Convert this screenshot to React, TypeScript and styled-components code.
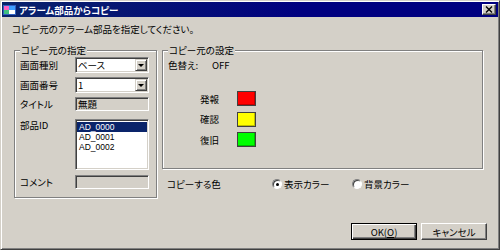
import React from 'react';
import styled, { createGlobalStyle } from 'styled-components';

const GlobalStyle = createGlobalStyle`
  html, body {
    margin: 0;
    padding: 0;
    background: #d4d0c8;
  }
  body {
    font-family: "Noto Sans CJK JP", "Liberation Sans", sans-serif;
    font-size: 9.5px;
    font-feature-settings: "palt";
    color: #000;
  }
  * {
    box-sizing: border-box;
  }
`;

const Window = styled.div`
  width: 500px;
  height: 250px;
  background: #d4d0c8;
  border: 1px solid;
  border-color: #d4d0c8 #404040 #404040 #d4d0c8;
  box-shadow: inset 1px 1px 0 #fff, inset -1px -1px 0 #808080;
  padding: 1px;
  display: flex;
  flex-direction: column;
`;

const TitleBar = styled.div`
  height: 15px;
  display: flex;
  align-items: center;
  padding: 0 2px 0 1px;
  background: linear-gradient(to right, #0a246a, #000080 60%);
  color: #fff;
`;

const TitleText = styled.span`
  margin-left: 3px;
  font-weight: bold;
  line-height: 12px;
`;

const CloseButton = styled.div`
  margin-left: auto;
  width: 14px;
  height: 11px;
  display: flex;
  align-items: center;
  justify-content: center;
  background: #d4d0c8;
  border: 1px solid;
  border-color: #fff #404040 #404040 #fff;
  box-shadow: inset -1px -1px 0 #808080;
`;

const Instruction = styled.div`
  margin: 6px 0 0 10px;
  line-height: 12px;
`;

const Main = styled.div`
  display: flex;
  gap: 5px;
  margin: 9px 0 0 12px;
`;

const Group = styled.fieldset<{ $w: number; $h: number }>`
  margin: 0;
  width: ${(p) => p.$w}px;
  height: ${(p) => p.$h}px;
  border: 1px solid #808080;
  box-shadow: inset 1px 1px 0 #fff, 1px 1px 0 #fff;
  padding: 1px 6px 6px 5px;
`;

const Legend = styled.legend`
  padding: 0 1px;
  line-height: 12px;
  background: #d4d0c8;
`;

const FormRow = styled.div<{ $mt: number; $top?: boolean }>`
  display: flex;
  align-items: ${(p) => (p.$top ? 'flex-start' : 'center')};
  margin-top: ${(p) => p.$mt}px;
`;

const Label = styled.div<{ $w?: number }>`
  width: ${(p) => p.$w ?? 55}px;
  line-height: 12px;
  flex-shrink: 0;
`;

const Sunken = styled.div`
  width: 74px;
  border: 1px solid;
  border-color: #808080 #fff #fff #808080;
  box-shadow: inset 1px 1px 0 #404040, inset -1px -1px 0 #d4d0c8;
  padding: 1px;
`;

const Combo = styled(Sunken)`
  height: 16px;
  background: #fff;
  display: flex;
  align-items: center;
`;

const ComboText = styled.span`
  flex: 1;
  padding-left: 1px;
  line-height: 12px;
`;

const DropButton = styled.div`
  width: 12px;
  height: 12px;
  background: #d4d0c8;
  border: 1px solid;
  border-color: #d4d0c8 #404040 #404040 #d4d0c8;
  box-shadow: inset 1px 1px 0 #fff, inset -1px -1px 0 #808080;
  display: flex;
  align-items: center;
  justify-content: center;

  &::after {
    content: '';
    border-left: 3px solid transparent;
    border-right: 3px solid transparent;
    border-top: 3px solid #000;
    margin-top: 1px;
  }
`;

const ReadOnlyField = styled(Sunken)`
  height: 14px;
  background: #d4d0c8;
  padding-left: 2px;
  line-height: 10px;
`;

const ListBox = styled(Sunken)`
  height: 51px;
  background: #fff;
  padding: 2px 1px 1px 1px;
`;

const ListItem = styled.div<{ $selected?: boolean }>`
  height: 10px;
  line-height: 10px;
  padding-left: 2px;
  font-family: "Liberation Sans", sans-serif;
  font-size: 8.5px;
  background: ${(p) => (p.$selected ? '#0a246a' : 'transparent')};
  color: ${(p) => (p.$selected ? '#fff' : '#000')};
`;

const RightColumn = styled.div`
  display: flex;
  flex-direction: column;
`;

const SwitchRow = styled.div`
  display: flex;
  margin-top: 2px;
  line-height: 12px;
`;

const ColorTable = styled.div`
  display: grid;
  grid-template-columns: 37px 19px;
  grid-auto-rows: 15px;
  row-gap: 5.5px;
  align-items: center;
  margin: 20px 0 0 32px;
`;

const Swatch = styled.div<{ $color: string }>`
  width: 19px;
  height: 15px;
  background: ${(p) => p.$color};
  border: 1px solid #404040;
  box-shadow: inset -1px -1px 0 rgba(0, 0, 0, 0.25);
`;

const CopyRow = styled.div`
  display: flex;
  align-items: center;
  margin: 9px 0 0 5px;
  line-height: 12px;
`;

const RadioOption = styled.label<{ $w: number }>`
  display: flex;
  align-items: center;
  gap: 2px;
  width: ${(p) => p.$w}px;
`;

const Radio = styled.span<{ $checked?: boolean }>`
  width: 10px;
  height: 10px;
  border-radius: 50%;
  background: #fff;
  border: 1px solid;
  border-color: #808080 #fff #fff #808080;
  box-shadow: inset 1px 1px 0 #404040;
  display: flex;
  align-items: center;
  justify-content: center;

  &::after {
    content: '';
    width: 3px;
    height: 3px;
    border-radius: 50%;
    background: ${(p) => (p.$checked ? '#000' : 'transparent')};
  }
`;

const ButtonRow = styled.div`
  display: flex;
  justify-content: flex-end;
  gap: 4px;
  margin: 25px 11px 0 0;
`;

const Button = styled.button<{ $default?: boolean }>`
  width: 66px;
  height: 17px;
  padding: 0;
  font: inherit;
  font-feature-settings: "palt";
  color: #000;
  background: #d4d0c8;
  border: 1px solid;
  border-color: ${(p) => (p.$default ? '#000' : '#fff #404040 #404040 #fff')};
  box-shadow: ${(p) =>
    p.$default
      ? 'inset 1px 1px 0 #fff, inset -1px -1px 0 #404040, inset -2px -2px 0 #808080'
      : 'inset -1px -1px 0 #808080'};
  line-height: 12px;
`;

const TitleIcon = () => (
  <svg width="13" height="12" viewBox="0 0 13 12">
    <rect x="0.5" y="1.5" width="12" height="9" fill="#e8f0ff" stroke="#3060c0" />
    <rect x="1" y="2" width="5" height="4" fill="#ff60c0" />
    <rect x="6" y="2" width="6" height="4" fill="#40a0ff" />
    <rect x="1" y="6" width="5" height="4" fill="#40c080" />
    <rect x="6" y="6" width="6" height="4" fill="#ffffff" />
  </svg>
);

const CloseIcon = () => (
  <svg width="8" height="7" viewBox="0 0 8 7">
    <path d="M1 0.5 L7 6.5 M7 0.5 L1 6.5" stroke="#000" strokeWidth="1.4" />
  </svg>
);

const App: React.FC = () => {
  return (
    <Window>
      <GlobalStyle />
      <TitleBar>
        <TitleIcon />
        <TitleText>アラーム部品からコピー</TitleText>
        <CloseButton>
          <CloseIcon />
        </CloseButton>
      </TitleBar>

      <Instruction>コピー元のアラーム部品を指定してください。</Instruction>

      <Main>
        <Group $w={143} $h={154}>
          <Legend>コピー元の指定</Legend>
          <FormRow $mt={0}>
            <Label>画面種別</Label>
            <Combo>
              <ComboText>ベース</ComboText>
              <DropButton />
            </Combo>
          </FormRow>
          <FormRow $mt={4}>
            <Label>画面番号</Label>
            <Combo>
              <ComboText>1</ComboText>
              <DropButton />
            </Combo>
          </FormRow>
          <FormRow $mt={4}>
            <Label>タイトル</Label>
            <ReadOnlyField>無題</ReadOnlyField>
          </FormRow>
          <FormRow $mt={8} $top>
            <Label>部品ID</Label>
            <ListBox>
              <ListItem $selected>AD_0000</ListItem>
              <ListItem>AD_0001</ListItem>
              <ListItem>AD_0002</ListItem>
            </ListBox>
          </FormRow>
          <FormRow $mt={5}>
            <Label>コメント</Label>
            <ReadOnlyField />
          </FormRow>
        </Group>

        <RightColumn>
          <Group $w={321} $h={125}>
            <Legend>コピー元の設定</Legend>
            <SwitchRow>
              <Label $w={44}>色替え:</Label>
              <span>OFF</span>
            </SwitchRow>
            <ColorTable>
              <span>発報</span>
              <Swatch $color="#ff0000" />
              <span>確認</span>
              <Swatch $color="#ffff00" />
              <span>復旧</span>
              <Swatch $color="#00ff00" />
            </ColorTable>
          </Group>
          <CopyRow>
            <Label $w={105}>コピーする色</Label>
            <RadioOption $w={80}>
              <Radio $checked />
              表示カラー
            </RadioOption>
            <RadioOption $w={80}>
              <Radio />
              背景カラー
            </RadioOption>
          </CopyRow>
        </RightColumn>
      </Main>

      <ButtonRow>
        <Button $default>
          OK(<u>O</u>)
        </Button>
        <Button>キャンセル</Button>
      </ButtonRow>
    </Window>
  );
};

export default App;
